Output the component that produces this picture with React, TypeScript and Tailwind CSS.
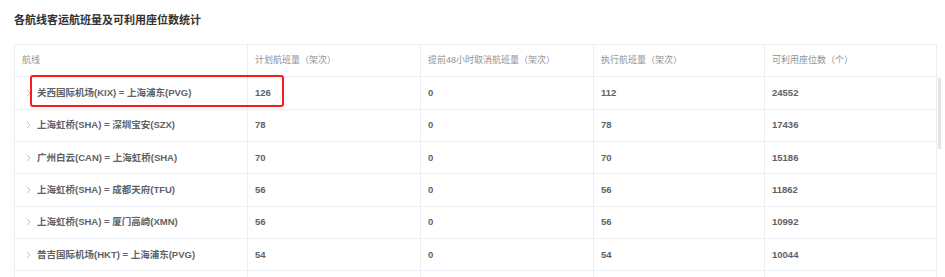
// ─── Route Flight Stats Table ──────────────────────────────
const rows = [
  { route: '关西国际机场(KIX) = 上海浦东(PVG)', plan: 126, cancel: 0, exec: 112, seats: 24552 },
  { route: '上海虹桥(SHA) = 深圳宝安(SZX)', plan: 78, cancel: 0, exec: 78, seats: 17436 },
  { route: '广州白云(CAN) = 上海虹桥(SHA)', plan: 70, cancel: 0, exec: 70, seats: 15186 },
  { route: '上海虹桥(SHA) = 成都天府(TFU)', plan: 56, cancel: 0, exec: 56, seats: 11862 },
  { route: '上海虹桥(SHA) = 厦门高崎(XMN)', plan: 56, cancel: 0, exec: 56, seats: 10992 },
  { route: '普吉国际机场(HKT) = 上海浦东(PVG)', plan: 54, cancel: 0, exec: 54, seats: 10044 },
]

const font = { fontFamily: '"Liberation Sans", "Noto Sans CJK SC", sans-serif' }

function Chevron() {
  return (
    <svg width="5" height="8" viewBox="0 0 5 8" className="shrink-0">
      <polyline points="1,1 4,4 1,7" fill="none" stroke="#c0c4cc" strokeWidth="1" />
    </svg>
  )
}

const cols = ['w-[233px]', 'w-[173px]', 'w-[173px]', 'w-[171px]', 'w-[172px]']

export default function App() {
  return (
    <div className="h-[277px] overflow-hidden bg-white pl-[14px] pt-[10px]" style={font}>
      <h2 className="text-[11px] leading-[20px] font-bold text-[#303133]">各航线客运航班量及可利用座位数统计</h2>

      <div className="relative mt-[14px] w-[927px]">
        {/* header */}
        <table className="w-[922px] table-fixed border-collapse">
          <thead>
            <tr className="h-[32px]">
              {['航线', '计划航班量（架次）', '提前48小时取消航班量（架次）', '执行航班量（架次）', '可利用座位数（个）'].map((h, i) => (
                <th
                  key={h}
                  className={`${cols[i]} border border-[#ebeef5] px-[7px] text-left text-[9px] font-normal text-[#909399]`}
                >
                  {h}
                </th>
              ))}
            </tr>
          </thead>
        </table>

        {/* body + scrollbar (scroll area clipped) */}
        <div className="flex h-[201px] overflow-hidden">
          <table className="w-[922px] self-start table-fixed border-collapse">
            <tbody>
              {rows.map((r) => (
                <tr key={r.route} className="h-[32.3px] text-[9.5px] font-bold text-[#606266]">
                  <td className={`${cols[0]} border border-t-0 border-[#ebeef5] pl-[11px]`}>
                    <div className="flex items-center gap-[6px]">
                      <Chevron />
                      <span>{r.route}</span>
                    </div>
                  </td>
                  <td className={`${cols[1]} border border-t-0 border-[#ebeef5] px-[7px]`}>{r.plan}</td>
                  <td className={`${cols[2]} border border-t-0 border-[#ebeef5] px-[7px]`}>{r.cancel}</td>
                  <td className={`${cols[3]} border border-t-0 border-[#ebeef5] px-[7px]`}>{r.exec}</td>
                  <td className={`${cols[4]} border border-t-0 border-[#ebeef5] px-[7px]`}>{r.seats}</td>
                </tr>
              ))}
              {/* next row, scrolled out of view */}
              <tr className="h-[32.3px]">
                {cols.map((c) => (
                  <td key={c + 'x'} className={`${c} border border-t-0 border-[#ebeef5]`} />
                ))}
              </tr>
            </tbody>
          </table>
          <div className="w-[5px] pt-[1px] pl-[1px]">
            <div className="h-[71px] w-[3px] bg-[#e4e4e4]" />
          </div>
        </div>

        {/* highlight annotation */}
        <div className="pointer-events-none absolute left-[16px] top-[31px] h-[32px] w-[254px] rounded-[3px] border-2 border-[#fa1c1c]" />
      </div>
    </div>
  )
}
